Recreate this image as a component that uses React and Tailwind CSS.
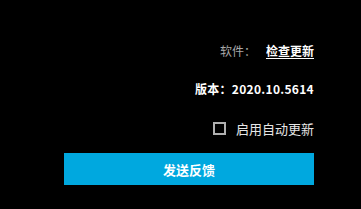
export default function App() {
  return (
    <div
      className="w-[361px] h-[209px] bg-black flex flex-col items-end pr-[47px] text-[12px]"
      style={{ fontFamily: '"Noto Sans CJK SC", "Noto Sans", sans-serif' }}
    >
      {/* software line */}
      <div className="mt-[42px] h-[18px] flex items-center leading-none">
        <span className="text-[#a8a8a8]">软件：</span>
        <span className="ml-[10px] font-bold text-white underline underline-offset-2">检查更新</span>
      </div>

      {/* version */}
      <div className="mt-[20px] h-[18px] flex items-center leading-none font-bold text-white tracking-[0.3px]">
        版本：2020.10.5614
      </div>

      {/* auto update */}
      <label className="mt-[21px] h-[18px] flex items-center leading-none">
        <span className="w-[13px] h-[13px] border-2 border-[#b0b0b0]" />
        <span className="ml-[10px] text-[13px] text-[#e6e6e6]">启用自动更新</span>
      </label>

      {/* feedback button */}
      <button className="mt-[16px] w-[250px] h-[32px] bg-[#00a8df] text-white font-bold text-[13px] leading-none flex items-center justify-center">
        发送反馈
      </button>
    </div>
  );
}
